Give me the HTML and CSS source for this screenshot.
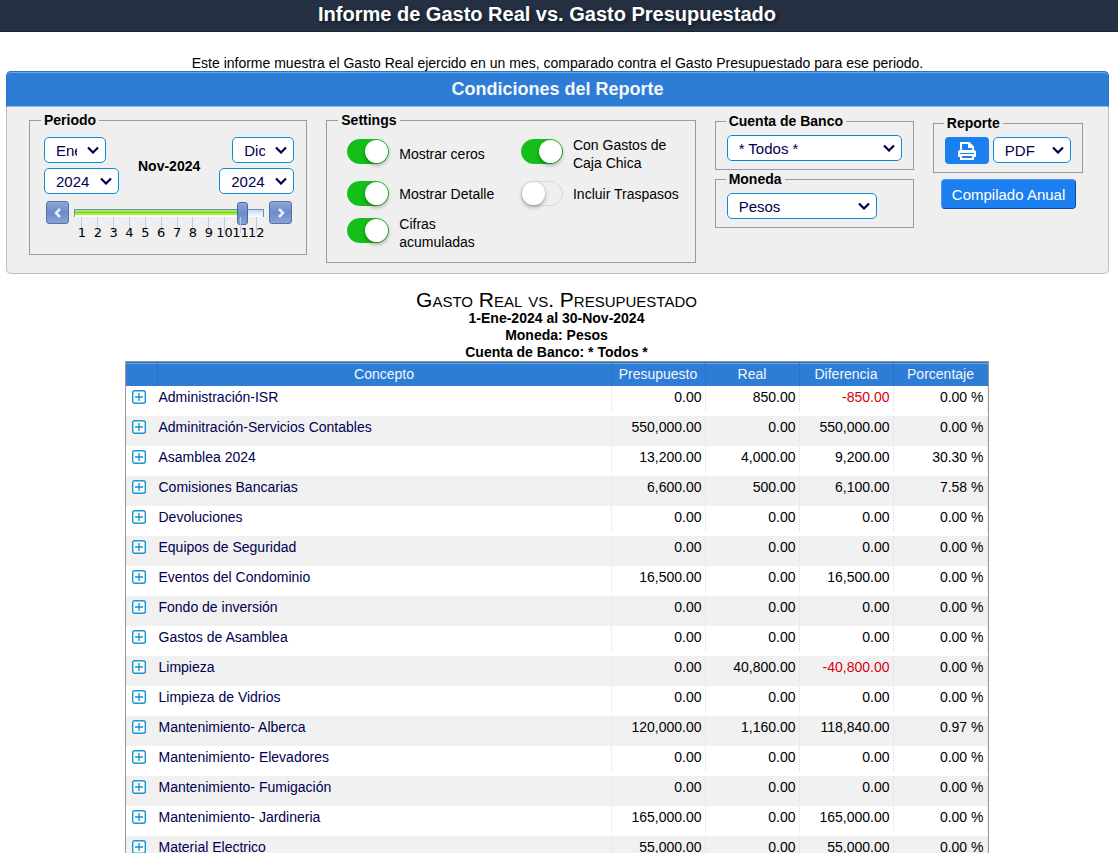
FILE: index.html
```
<!DOCTYPE html>
<html lang="es">
<head>
    <meta charset="UTF-8">
    <meta name="viewport" content="width=device-width, initial-scale=1.0">
    <title>Informe de Gasto Real vs. Gasto Presupuestado</title>
    <link rel="stylesheet" href="styles.css">
</head>
<body>
    <!-- Icono para expandir renglones -->
    <svg class="sprite" aria-hidden="true">
        <symbol id="mas" viewBox="0 0 14 14">
            <rect x="0.7" y="0.7" width="12.6" height="12.6" rx="2" fill="#fff" stroke="#1a94d2" stroke-width="1.4"/>
            <path d="M7 3v8M3 7h8" stroke="#1a94d2" stroke-width="1.4"/>
        </symbol>
    </svg>

    <header class="topbar">
        <h1>Informe de Gasto Real vs. Gasto Presupuestado</h1>
    </header>

    <main>
        <p class="intro">Este informe muestra el Gasto Real ejercido en un mes, comparado contra el Gasto Presupuestado para ese periodo.</p>

        <!-- Condiciones -->
        <section class="panel">
            <h2>Condiciones del Reporte</h2>
            <form class="panel-body">
                <fieldset class="periodo">
                    <legend>Periodo</legend>
                    <div class="fechas">
                        <div class="fecha">
                            <select class="mes" aria-label="Mes inicial"><option>Ene</option></select>
                            <select class="anio" aria-label="Año inicial"><option>2024</option></select>
                        </div>
                        <output class="actual">Nov-2024</output>
                        <div class="fecha fin">
                            <select class="mes" aria-label="Mes final"><option>Dic</option></select>
                            <select class="anio" aria-label="Año final"><option>2024</option></select>
                        </div>
                    </div>
                    <div class="slider">
                        <button type="button" class="flecha" aria-label="Anterior"><svg viewBox="0 0 10 12"><path d="M7 2L3 6l4 4"/></svg></button>
                        <div class="regla">
                            <input type="range" min="0" max="12" value="11" aria-label="Mes">
                            <ol class="meses">
                                <li>1</li><li>2</li><li>3</li><li>4</li><li>5</li><li>6</li>
                                <li>7</li><li>8</li><li>9</li><li>10</li><li>11</li><li>12</li>
                            </ol>
                        </div>
                        <button type="button" class="flecha" aria-label="Siguiente"><svg viewBox="0 0 10 12"><path d="M3 2l4 4-4 4"/></svg></button>
                    </div>
                </fieldset>

                <fieldset class="settings">
                    <legend>Settings</legend>
                    <div class="opciones">
                        <label class="alta"><input type="checkbox" checked><span>Mostrar ceros</span></label>
                        <label class="alta"><input type="checkbox" checked><span>Con Gastos de Caja Chica</span></label>
                        <label><input type="checkbox" checked><span>Mostrar Detalle</span></label>
                        <label><input type="checkbox"><span>Incluir Traspasos</span></label>
                        <label class="alta"><input type="checkbox" checked><span>Cifras acumuladas</span></label>
                    </div>
                </fieldset>

                <div class="columna">
                    <fieldset class="chico">
                        <legend>Cuenta de Banco</legend>
                        <select class="cuenta" aria-label="Cuenta de Banco"><option>* Todos *</option></select>
                    </fieldset>
                    <fieldset class="chico">
                        <legend>Moneda</legend>
                        <select class="moneda" aria-label="Moneda"><option>Pesos</option></select>
                    </fieldset>
                </div>

                <div class="columna reporte">
                    <fieldset class="chico">
                        <legend>Reporte</legend>
                        <div class="salida">
                            <button type="button" class="imprimir" aria-label="Imprimir">
                                <svg viewBox="0 0 20 19">
                                    <path d="M4 11V2h8l4 4v5" fill="none" stroke="#fff" stroke-width="2"/>
                                    <path d="M11 1v6h6z" fill="#fff"/>
                                    <path d="M3 9h14a2 2 0 0 1 2 2v5H1v-5a2 2 0 0 1 2-2z" fill="#fff"/>
                                    <path d="M4 14h12v4H4z" fill="#1c7ff0" stroke="#fff" stroke-width="2"/>
                                    <path d="M3 12.500h14" stroke="#1c7ff0"/>
                                </svg>
                            </button>
                            <select class="formato" aria-label="Formato"><option>PDF</option></select>
                        </div>
                    </fieldset>
                    <button type="button" class="compilado">Compilado Anual</button>
                </div>
            </form>
        </section>

        <!-- Reporte -->
        <section class="informe">
            <h3>Gasto Real vs. Presupuestado</h3>
            <p>1-Ene-2024 al 30-Nov-2024</p>
            <p>Moneda: Pesos</p>
            <p>Cuenta de Banco: * Todos *</p>

            <table>
                <colgroup>
                    <col class="c-icono"><col><col class="c-num"><col class="c-num"><col class="c-num"><col class="c-num">
                </colgroup>
                <thead>
                    <tr><th></th><th>Concepto</th><th>Presupuesto</th><th>Real</th><th>Diferencia</th><th>Porcentaje</th></tr>
                </thead>
                <tbody>
                    <tr><td><button class="mas" aria-label="Expandir"><svg><use href="#mas"/></svg></button></td><td>Administración-ISR</td><td>0.00</td><td>850.00</td><td class="neg">-850.00</td><td>0.00 %</td></tr>
                    <tr><td><button class="mas" aria-label="Expandir"><svg><use href="#mas"/></svg></button></td><td>Adminitración-Servicios Contables</td><td>550,000.00</td><td>0.00</td><td>550,000.00</td><td>0.00 %</td></tr>
                    <tr><td><button class="mas" aria-label="Expandir"><svg><use href="#mas"/></svg></button></td><td>Asamblea 2024</td><td>13,200.00</td><td>4,000.00</td><td>9,200.00</td><td>30.30 %</td></tr>
                    <tr><td><button class="mas" aria-label="Expandir"><svg><use href="#mas"/></svg></button></td><td>Comisiones Bancarias</td><td>6,600.00</td><td>500.00</td><td>6,100.00</td><td>7.58 %</td></tr>
                    <tr><td><button class="mas" aria-label="Expandir"><svg><use href="#mas"/></svg></button></td><td>Devoluciones</td><td>0.00</td><td>0.00</td><td>0.00</td><td>0.00 %</td></tr>
                    <tr><td><button class="mas" aria-label="Expandir"><svg><use href="#mas"/></svg></button></td><td>Equipos de Seguridad</td><td>0.00</td><td>0.00</td><td>0.00</td><td>0.00 %</td></tr>
                    <tr><td><button class="mas" aria-label="Expandir"><svg><use href="#mas"/></svg></button></td><td>Eventos del Condominio</td><td>16,500.00</td><td>0.00</td><td>16,500.00</td><td>0.00 %</td></tr>
                    <tr><td><button class="mas" aria-label="Expandir"><svg><use href="#mas"/></svg></button></td><td>Fondo de inversión</td><td>0.00</td><td>0.00</td><td>0.00</td><td>0.00 %</td></tr>
                    <tr><td><button class="mas" aria-label="Expandir"><svg><use href="#mas"/></svg></button></td><td>Gastos de Asamblea</td><td>0.00</td><td>0.00</td><td>0.00</td><td>0.00 %</td></tr>
                    <tr><td><button class="mas" aria-label="Expandir"><svg><use href="#mas"/></svg></button></td><td>Limpieza</td><td>0.00</td><td>40,800.00</td><td class="neg">-40,800.00</td><td>0.00 %</td></tr>
                    <tr><td><button class="mas" aria-label="Expandir"><svg><use href="#mas"/></svg></button></td><td>Limpieza de Vidrios</td><td>0.00</td><td>0.00</td><td>0.00</td><td>0.00 %</td></tr>
                    <tr><td><button class="mas" aria-label="Expandir"><svg><use href="#mas"/></svg></button></td><td>Mantenimiento- Alberca</td><td>120,000.00</td><td>1,160.00</td><td>118,840.00</td><td>0.97 %</td></tr>
                    <tr><td><button class="mas" aria-label="Expandir"><svg><use href="#mas"/></svg></button></td><td>Mantenimiento- Elevadores</td><td>0.00</td><td>0.00</td><td>0.00</td><td>0.00 %</td></tr>
                    <tr><td><button class="mas" aria-label="Expandir"><svg><use href="#mas"/></svg></button></td><td>Mantenimiento- Fumigación</td><td>0.00</td><td>0.00</td><td>0.00</td><td>0.00 %</td></tr>
                    <tr><td><button class="mas" aria-label="Expandir"><svg><use href="#mas"/></svg></button></td><td>Mantenimiento- Jardineria</td><td>165,000.00</td><td>0.00</td><td>165,000.00</td><td>0.00 %</td></tr>
                    <tr><td><button class="mas" aria-label="Expandir"><svg><use href="#mas"/></svg></button></td><td>Material Electrico</td><td>55,000.00</td><td>0.00</td><td>55,000.00</td><td>0.00 %</td></tr>
                </tbody>
            </table>
        </section>
    </main>
</body>
</html>
```
FILE: styles.css
```
* {
    box-sizing: border-box;
}

body {
    margin: 0;
    height: 100vh;
    overflow: hidden;
    background: #fff;
    color: #000;
    font-family: "Liberation Sans", Arial, sans-serif;
    font-size: 14px;
    line-height: 18px;
}

h1, h2, h3, p {
    margin: 0;
    text-align: center;
}

.sprite {
    display: none;
}

.topbar {
    height: 32px;
    padding-right: 24px;
    background: #253142;
    border-bottom: 1px solid #1b2635;
}

.topbar h1 {
    color: #fff;
    font-size: 20px;
    line-height: 28px;
    text-shadow: 2px 2px 4px #111a26;
}

main {
    margin: 0 9px 0 6px;
    padding-top: 23px;
}

.intro {
    line-height: 16px;
}

/* Panel de condiciones */
.panel {
    border: 1px solid #bdbdbd;
    border-top: 0;
    border-radius: 5px;
    background: #efefef;
}

.panel h2 {
    margin: 0 -1px;
    border: 1px solid #2b74c4;
    border-bottom-color: #8dbdf0;
    border-radius: 5px 5px 0 0;
    background: #2d7dd6;
    box-shadow: inset 0 1px 0 #6aa8ea;
    color: #f4f6fa;
    font-size: 18px;
    line-height: 34px;
}

.panel-body {
    display: grid;
    grid-template-columns: 278fr 369fr 199fr 150fr;
    gap: 19px;
    align-items: start;
    padding: 4px 25px 10px 22px;
}

fieldset {
    min-width: 0;
    margin: 0;
    padding: 0;
    border: 1px solid #9a9a9a;
}

legend {
    margin-left: -1px;
    padding: 0 3px;
    font-weight: bold;
}

select {
    appearance: none;
    height: 26px;
    padding: 0 28px 0 11px;
    border: 1px solid #1089d3;
    border-radius: 5px;
    background: #fff url("data:image/svg+xml,%3Csvg xmlns='http://www.w3.org/2000/svg' width='12' height='8' viewBox='0 0 12 8'%3E%3Cpath d='M1 1.500l5 5 5-5' fill='none' stroke='%23000050' stroke-width='2.200'/%3E%3C/svg%3E") right 6px center no-repeat;
    color: #000050;
    font-family: inherit;
    font-size: 15px;
}

button {
    font-family: inherit;
    cursor: pointer;
}

/* Periodo */
.periodo {
    padding: 8px 12px 12px 14px;
}

.periodo legend {
    margin-left: -3px;
}

.fechas {
    display: flex;
    justify-content: space-between;
    align-items: center;
}

.fecha {
    display: flex;
    flex-direction: column;
    align-items: flex-start;
    gap: 5px;
}

.fecha.fin {
    align-items: flex-end;
}

.mes {
    width: 62px;
}

.anio {
    width: 75px;
}

.actual {
    font-weight: bold;
}

.slider {
    display: flex;
    align-items: flex-start;
    gap: 5px;
    margin-top: 7px;
    padding: 0 2px;
}

.flecha {
    flex: none;
    display: flex;
    align-items: center;
    justify-content: center;
    width: 23px;
    height: 23px;
    padding: 0;
    border: 1px solid #5673a8;
    border-radius: 3px;
    background: linear-gradient(#8ea9d9, #6c8bc6 50%, #86a3d6);
}

.flecha svg {
    width: 10px;
    height: 12px;
    fill: none;
    stroke: #e8eefa;
    stroke-width: 2.500;
}

.regla {
    flex: 1;
    min-width: 0;
}

.regla input {
    display: block;
    appearance: none;
    width: 100%;
    height: 23px;
    margin: 0;
    background: none;
}

.regla input::-webkit-slider-runnable-track {
    height: 8px;
    border: 1px solid #6f8dc0;
    border-bottom: 0;
    background:
        linear-gradient(#a4ee4a 2px, #66cf12 2px, #66cf12 3px, #a4f048 3px, #a4f048 5px, #fff 5px) 0 0 / 88% 100% no-repeat,
        linear-gradient(#c3d9f8, #fff);
}

.regla input::-webkit-slider-thumb {
    appearance: none;
    width: 11px;
    height: 23px;
    margin-top: -8px;
    border: 1px solid #4a689f;
    border-radius: 3px;
    background: linear-gradient(#8ea9d9, #6c8bc6 50%, #86a3d6);
}

.meses {
    display: grid;
    grid-template-columns: repeat(12, 1fr);
    margin: -7px 0 0;
    padding: 0;
    list-style: none;
    font-family: "DejaVu Sans", Verdana, sans-serif;
    font-size: 13px;
}

.meses li {
    display: flex;
    justify-content: center;
    min-width: 0;
    padding-top: 7px;
    background: linear-gradient(#b5cdf0, #b5cdf0) center top / 1px 16px no-repeat;
}

/* Settings */
.settings {
    padding: 7px 0 11px 20px;
}

.settings legend {
    margin-left: -9px;
}

.opciones {
    display: grid;
    grid-template-columns: 1fr 1fr;
    row-gap: 9px;
}

.opciones label {
    display: flex;
    align-items: center;
    gap: 10px;
}

.opciones span {
    max-width: 108px;
}

.opciones input {
    appearance: none;
    flex: none;
    width: 42px;
    height: 25px;
    margin: 0;
    border: 1px solid #d8d8d8;
    border-radius: 13px;
    background: #efefef;
}

/* renglones de dos lineas */
.opciones .alta input {
    margin-bottom: 5px;
}

.opciones input::before {
    content: "";
    display: block;
    width: 23px;
    height: 23px;
    border-radius: 50%;
    background: #fff;
    box-shadow: 0 2px 4px rgba(0, 0, 0, 0.35);
}

.opciones input:checked {
    border-color: #14bf1a;
    background: #14bf1a;
}

.opciones input:checked::before {
    margin-left: 17px;
}

/* Cuenta, moneda y reporte */
.columna {
    padding-top: 1px;
}

.columna.reporte {
    padding-top: 3px;
}

.chico {
    padding: 5px 11px 8px;
}

.chico select {
    display: block;
}

.cuenta {
    width: 100%;
}

.moneda {
    width: 150px;
}

.salida {
    display: flex;
    gap: 4px;
}

.imprimir {
    width: 44px;
    height: 27px;
    padding: 0;
    border: 0;
    border-radius: 4px;
    background: #1c7ff0;
}

.imprimir svg {
    display: block;
    width: 20px;
    height: 19px;
    margin: 0 auto;
}

.formato {
    width: 78px;
}

.compilado {
    margin: 6px 0 0 8px;
    height: 30px;
    padding: 0 10px;
    border: 1px solid;
    border-color: #4a9af5 #0e4f9c #0e4f9c #4a9af5;
    border-radius: 4px;
    background: #1c7ff0;
    color: #fff;
    font-size: 15px;
    white-space: nowrap;
}

/* Informe */
.informe {
    padding: 16px 2px 0 0;
}

.informe h3 {
    font-size: 21px;
    font-weight: normal;
    font-variant: small-caps;
    line-height: 20px;
}

.informe p {
    font-weight: bold;
    line-height: 17px;
}

table {
    width: 100%;
    max-width: 864px;
    margin: 0 auto;
    border: 1px solid #999;
    border-collapse: separate;
    border-spacing: 0;
    table-layout: fixed;
}

.c-icono {
    width: 32px;
}

.c-num {
    width: 94px;
}

th {
    height: 24px;
    padding: 0 0 2px;
    border-top: 1px solid #2b6cb8;
    border-right: 1px solid #2b74c4;
    background: #2d7dd6;
    box-shadow: inset 0 1px 0 #6aa8ea;
    color: #f4f6fa;
    font-weight: normal;
}

th:last-child {
    border-right: 0;
}

td {
    height: 30px;
    padding: 2px 4px 0 0;
    text-align: right;
    vertical-align: top;
    background: repeating-linear-gradient(#dcdcdc 0 1px, transparent 1px 2px) right top / 1px 25px no-repeat;
}

td:nth-child(1),
td:nth-child(2) {
    color: #000050;
    text-align: left;
}

td:nth-child(1) {
    padding: 4px 0 0 6px;
    background: none;
}

td:nth-child(2) {
    padding-left: 1px;
}

tbody tr:nth-child(even) {
    background: #f1f1f1;
}

td.neg {
    color: #d9000d;
}

.mas {
    display: block;
    width: 14px;
    height: 14px;
    padding: 0;
    border: 0;
    background: none;
}

.mas svg {
    display: block;
    width: 14px;
    height: 14px;
}
```
